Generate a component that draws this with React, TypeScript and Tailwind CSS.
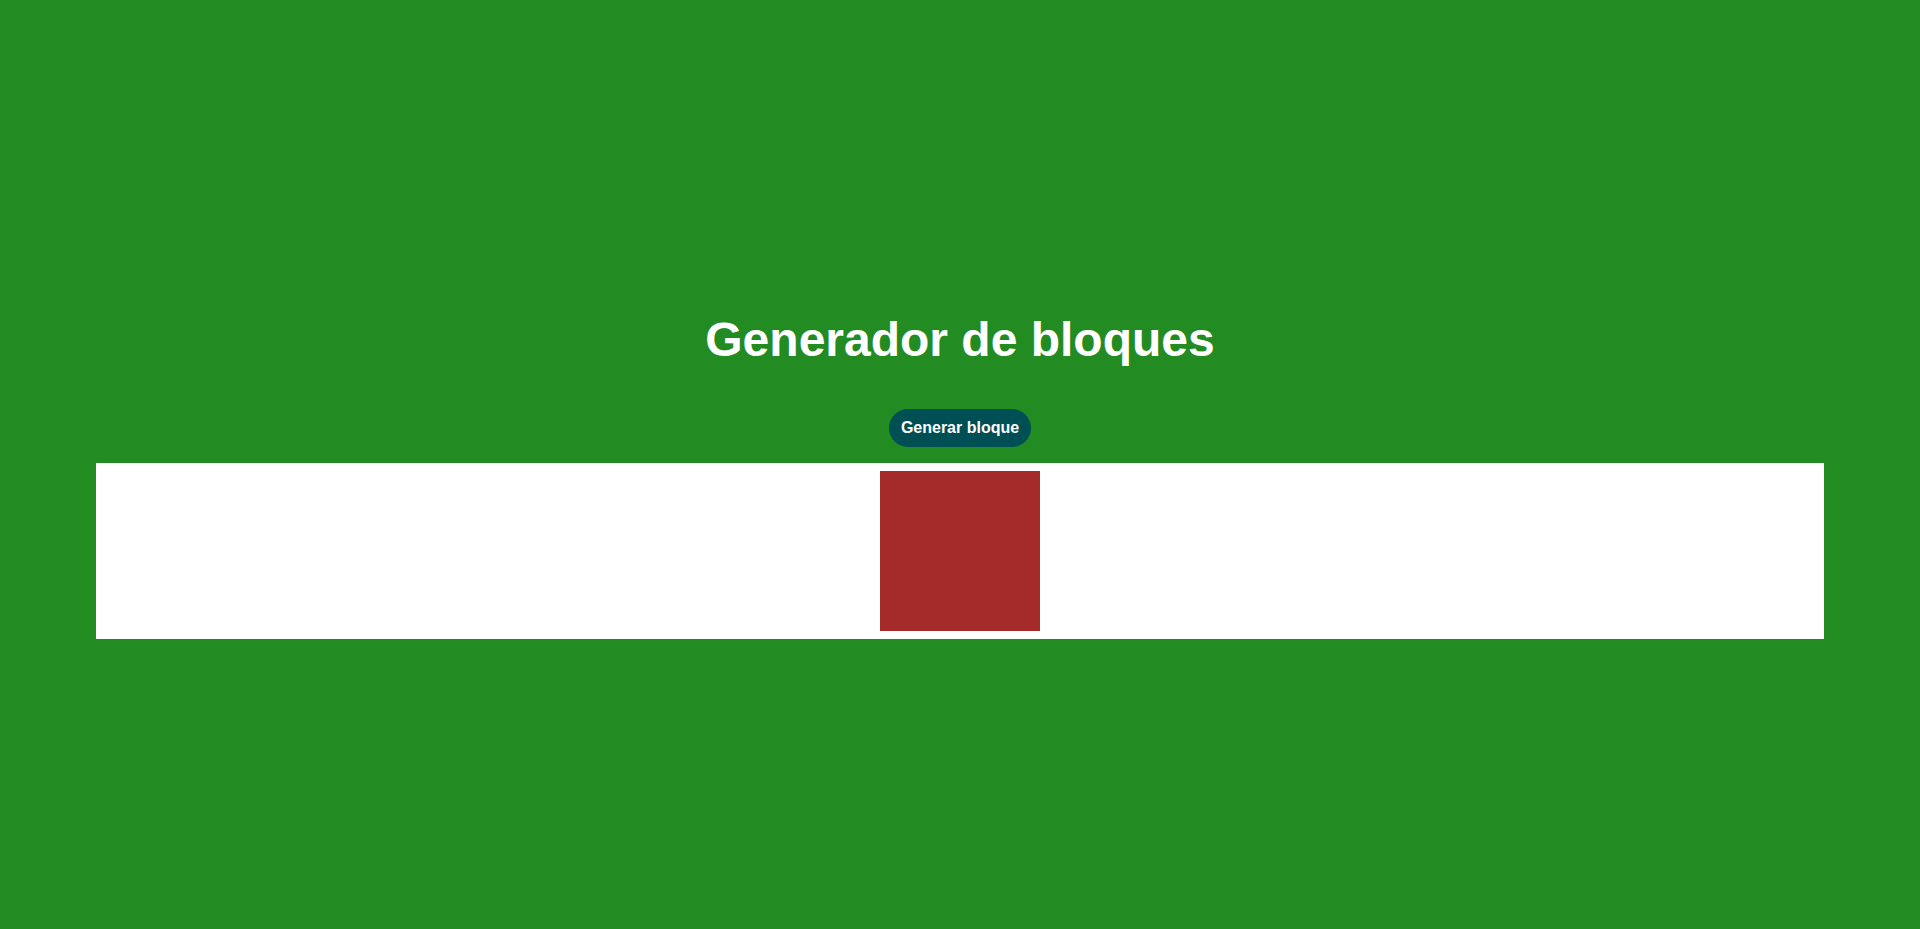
import React, { useState } from "react";

export default function App() {
  const [blocks, setBlocks] = useState([0]);

  return (
    <div className="min-h-screen w-full bg-[#228b22] pt-[312px] font-['Liberation_Sans',Arial,sans-serif]">
      <h1 className="text-center text-[48px] font-bold leading-[55px] text-white">Generador de bloques</h1>

      <div className="mt-[42px] flex justify-center">
        <button
          type="button"
          onClick={() => setBlocks((prev) => [...prev, prev.length])}
          className="h-[38px] rounded-full bg-[#004f54] px-3 text-[16px] font-bold text-white"
        >
          Generar bloque
        </button>
      </div>

      <div className="mx-auto mt-4 flex w-[90%] flex-wrap justify-center gap-2 bg-white py-2">
        {blocks.map((b) => (
          <div key={b} className="h-[160px] w-[160px] bg-[#a52a2a]" />
        ))}
      </div>
    </div>
  );
}
